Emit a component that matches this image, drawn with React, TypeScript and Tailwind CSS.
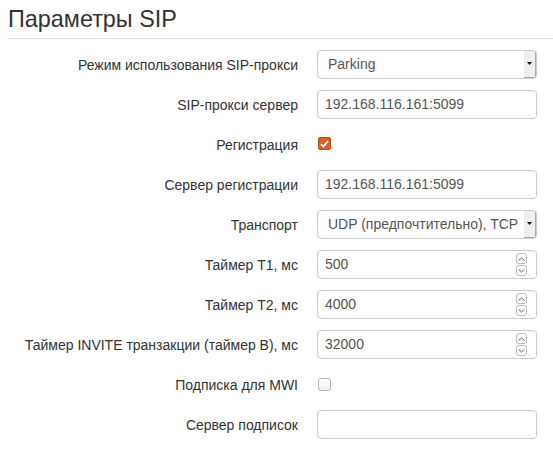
import React from 'react';

const font = { fontFamily: '"Liberation Sans", Arial, sans-serif' };

const Row: React.FC<{ label: string; children: React.ReactNode }> = ({ label, children }) => (
  <div className="flex items-center h-[29px]">
    <label className="w-[298px] text-right text-[14px] leading-[20px] text-[#333]">{label}</label>
    <div className="ml-[19px] w-[220px] h-full flex items-center">{children}</div>
  </div>
);

const TextInput: React.FC<{ value?: string }> = ({ value }) => (
  <div className="w-full h-full border border-[#ccc] rounded-[4px] bg-white pl-[7px] flex items-center text-[14px] text-[#555]">
    {value}
  </div>
);

const SelectBox: React.FC<{ value: string }> = ({ value }) => (
  <div className="w-full h-full border border-[#ccc] rounded-[4px] bg-white flex items-stretch overflow-hidden">
    <div className="flex-1 pl-[10px] flex items-center text-[14px] text-[#555] whitespace-nowrap overflow-hidden">{value}</div>
    <div className="w-[13px] my-[-1px] mr-[-1px] bg-[#efefef] border-r-2 border-b-2 border-[#a8a8a8] flex items-center justify-center">
      <svg width="5" height="3" viewBox="0 0 5 3">
        <path d="M0 0h5L2.5 3z" fill="#000" />
      </svg>
    </div>
  </div>
);

const NumberInput: React.FC<{ value: string }> = ({ value }) => (
  <div className="w-full h-full border border-[#ccc] rounded-[4px] bg-white pl-[7px] pr-[9px] flex items-center text-[14px] text-[#555]">
    <span className="flex-1">{value}</span>
    <div className="flex flex-col">
      <div className="w-[11px] h-[11px] border border-[#bbb] rounded-[3px] flex items-center justify-center">
        <svg width="7" height="4" viewBox="0 0 7 4">
          <path d="M0.5 3.5L3.5 0.8L6.5 3.5" stroke="#666" strokeWidth="1" fill="none" />
        </svg>
      </div>
      <div className="w-[11px] h-[11px] mt-[1px] border border-[#bbb] rounded-[3px] flex items-center justify-center">
        <svg width="7" height="4" viewBox="0 0 7 4">
          <path d="M0.5 0.5L3.5 3.2L6.5 0.5" stroke="#666" strokeWidth="1" fill="none" />
        </svg>
      </div>
    </div>
  </div>
);

const Checkbox: React.FC<{ checked?: boolean }> = ({ checked }) =>
  checked ? (
    <div className="ml-[1px] mb-[2px] w-[13px] h-[13px] rounded-[2px] bg-[#d5602b] border border-[#b94f20] flex items-center justify-center">
      <svg width="9" height="8" viewBox="0 0 9 8">
        <path d="M1 4.2L3.4 6.5L8 1.2" stroke="#fff" strokeWidth="1.8" fill="none" />
      </svg>
    </div>
  ) : (
    <div className="ml-[1px] w-[13px] h-[13px] rounded-[3px] border border-[#b5b5b5] bg-gradient-to-b from-white to-[#f0f0f0]" />
  );

export default function App() {
  return (
    <div className="w-[553px] h-[455px] bg-white pl-[7px]" style={font}>
      <h2 className="mt-[6px] pl-[1px] pb-[6px] text-[23.4px] leading-[26px] text-[#333] border-b border-[#e5e5e5]">
        Параметры SIP
      </h2>
      <div className="mt-[11px] flex flex-col gap-[11px] -ml-[7px]">
        <Row label="Режим использования SIP-прокси">
          <SelectBox value="Parking" />
        </Row>
        <Row label="SIP-прокси сервер">
          <TextInput value="192.168.116.161:5099" />
        </Row>
        <Row label="Регистрация">
          <Checkbox checked />
        </Row>
        <Row label="Сервер регистрации">
          <TextInput value="192.168.116.161:5099" />
        </Row>
        <Row label="Транспорт">
          <SelectBox value="UDP (предпочтительно), TCP" />
        </Row>
        <Row label="Таймер T1, мс">
          <NumberInput value="500" />
        </Row>
        <Row label="Таймер T2, мс">
          <NumberInput value="4000" />
        </Row>
        <Row label="Таймер INVITE транзакции (таймер B), мс">
          <NumberInput value="32000" />
        </Row>
        <Row label="Подписка для MWI">
          <Checkbox />
        </Row>
        <Row label="Сервер подписок">
          <TextInput />
        </Row>
      </div>
    </div>
  );
}
